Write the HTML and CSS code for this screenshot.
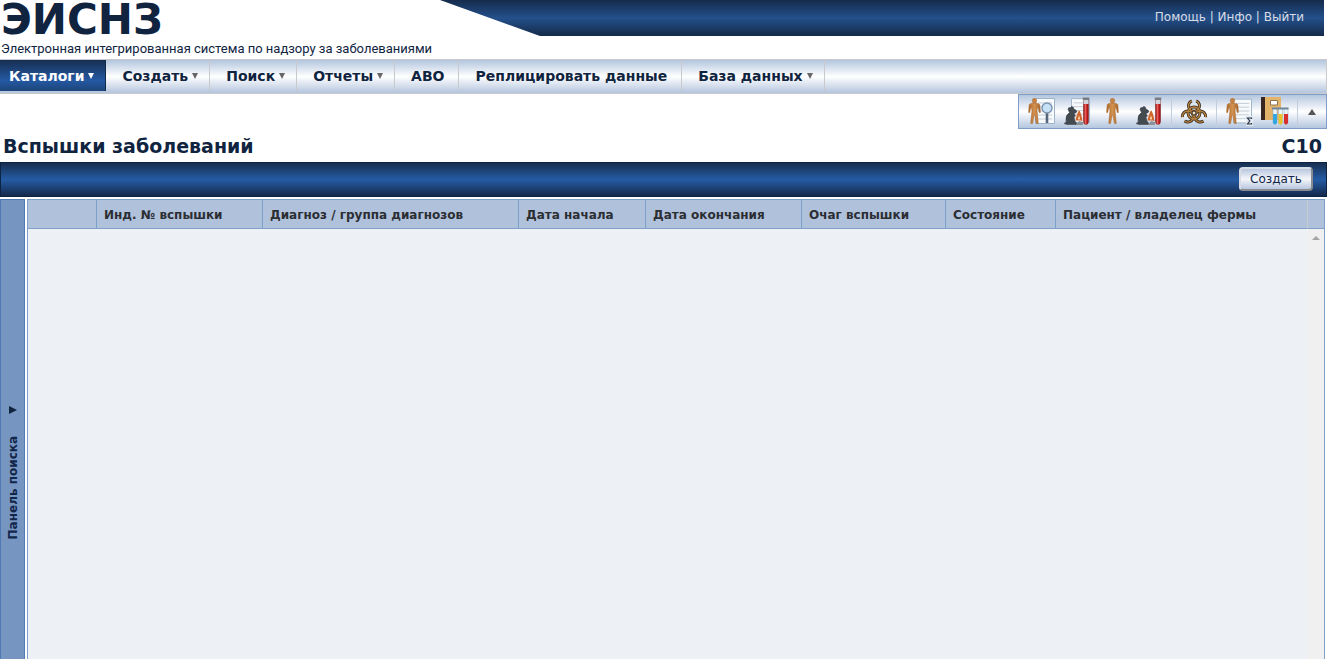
FILE: index.html
```html
<!DOCTYPE html>
<html lang="ru">
<head>
<meta charset="utf-8">
<title>ЭИСНЗ – Вспышки заболеваний</title>
<link rel="stylesheet" href="styles.css">
</head>
<body>
<svg class="defs" aria-hidden="true">
  <defs>
    <linearGradient id="skin" x1="0" x2="1" y1="0" y2="0"><stop offset="0" stop-color="#b06a2b"/><stop offset=".5" stop-color="#d3924f"/><stop offset="1" stop-color="#a8652a"/></linearGradient>
    <linearGradient id="blood" x1="0" x2="1" y1="0" y2="0"><stop offset="0" stop-color="#8c1010"/><stop offset=".4" stop-color="#e8605a"/><stop offset=".7" stop-color="#c01c1c"/><stop offset="1" stop-color="#8c1010"/></linearGradient>
    <symbol id="man" viewBox="0 0 14 28"><path d="M5.500 5.300L2.200 6.300Q1.200 6.800 1.100 8.500L.6 15.500 1.800 15.800 3.400 9.500 4.200 13 2.900 27.500H5L6.900 17.500H7.100L9 27.500H11.100L9.800 13 10.600 9.500 12.200 15.800 13.400 15.500 12.900 8.500Q12.800 6.800 11.800 6.300L8.500 5.300Z" fill="url(#skin)" stroke="#9a5c27" stroke-width=".4"/><circle cx="7" cy="2.900" r="2.500" fill="#c58243" stroke="#9a5c27" stroke-width=".4"/></symbol>
    <symbol id="sheet" viewBox="0 0 20 26"><path d="M.5 .5H19.500V25.500H.5Z" fill="#f7fafc" stroke="#9db3c8"/><path d="M3 5H17M3 9H17M3 13H17M3 17H17M3 21H17" stroke="#c3cbd4"/></symbol>
    <symbol id="rat" viewBox="0 0 30 30"><path d="M1 26.500Q4 26 3 22.500 2.500 18 6.500 15.500L5 12.500Q5 10 7.500 10.500L8.500 9.500Q11 9.500 10.500 11.500L14 14 13 15.800 11 16.500 12.500 19 11 20 12 24 14.500 27.500H4Z" fill="#444b50" stroke="#33393e" stroke-width=".5"/><path d="M13 27.500L16 24 20 25V28H13Z" fill="#8c9298"/><path d="M12.500 23.500Q13 19 15.500 14L16.500 13.500Q19 18 19.500 24L17.500 23.500H14.500Z" fill="#d1662c"/><path d="M16 18.500L17 21.500 16 23 15 21.500Z" fill="#ffe0b8"/></symbol>
    <symbol id="tube" viewBox="0 0 8 28"><path d="M1.500 2V24Q1.500 27.500 4 27.500T6.500 24V2Z" fill="url(#blood)" stroke="#7a1a1a" stroke-width=".5"/><path d="M1.500 3H6.500V7H1.500Z" fill="#cdd5de"/><path d="M.8 .5H7.200V3H.8Z" fill="#777d83"/></symbol>
    <path id="lobe" d="M12.800 3.800A5.500 5.500 0 1 0 17.200 3.800"/>
    <g id="hazard" fill="none"><circle cx="15" cy="16" r="6"/><use href="#lobe"/><use href="#lobe" transform="rotate(120 15 16)"/><use href="#lobe" transform="rotate(240 15 16)"/></g>
  </defs>
</svg>

<header class="masthead">
  <div class="brand">
    <div class="logo">ЭИСНЗ</div>
    <div class="tagline">Электронная интегрированная система по надзору за заболеваниями</div>
  </div>
  <div class="banner">
    <div class="userlinks"><a href="#">Помощь</a> | <a href="#">Инфо</a> | <a href="#">Выйти</a></div>
  </div>
</header>

<nav class="menu">
  <a class="item active" href="#">Каталоги<i class="caret"></i></a>
  <a class="item" href="#">Создать<i class="caret"></i></a>
  <a class="item" href="#">Поиск<i class="caret"></i></a>
  <a class="item" href="#">Отчеты<i class="caret"></i></a>
  <a class="item plain" href="#">АВО</a>
  <a class="item plain" href="#">Реплицировать данные</a>
  <a class="item" href="#">База данных<i class="caret"></i></a>
</nav>

<div class="toolrow">
  <div class="toolbar">
    <div class="group main">
      <button class="tool wide" aria-label="Поиск случаев у людей"><svg viewBox="0 0 30 30"><use href="#sheet" x="8" y="1" width="20" height="26"/><use href="#man" x="1" y="0" width="13" height="28"/><path d="M20 16V26" stroke="#54677b" stroke-width="2.600"/><circle cx="20" cy="11" r="5" fill="#c6e0f6" stroke="#7a93ad" stroke-width="1.400"/></svg></button>
      <button class="tool wide" aria-label="Поиск ветеринарных случаев"><svg viewBox="0 0 30 30"><use href="#sheet" x="8" y="1" width="19" height="25"/><use href="#rat" x="0" y="0" width="30" height="30"/><use href="#tube" x="19" y="0" width="8" height="28"/></svg></button>
      <button class="tool wide" aria-label="Случай у человека"><svg viewBox="0 0 30 30"><use href="#man" x="7" y="0" width="13" height="28"/></svg></button>
      <button class="tool wide" aria-label="Ветеринарный случай"><svg viewBox="0 0 30 30"><use href="#rat" x="0" y="0" width="30" height="30"/><use href="#tube" x="19" y="0" width="8" height="28"/></svg></button>
    </div>
    <div class="group">
      <button class="tool" aria-label="Вспышки"><svg viewBox="0 0 30 30"><use href="#hazard" stroke="#33291d" stroke-width="3"/><use href="#hazard" stroke="#b98340" stroke-width="1.400"/><circle cx="15" cy="16" r="2" fill="#efe5d0" stroke="#33291d"/></svg></button>
    </div>
    <div class="group reports">
      <button class="tool wide" aria-label="Сводные данные"><svg viewBox="0 0 30 30"><use href="#sheet" x="8" y="1" width="19" height="26"/><use href="#man" x="1" y="0" width="13" height="28"/><path d="M21 19H28V29H21Z" fill="#e3eaf2"/><path d="M26.500 22V21H22.500L24.800 24 22.500 27H26.500V26" fill="none" stroke="#243244" stroke-width="1.200"/></svg></button>
      <button class="tool" aria-label="Лаборатория"><svg viewBox="0 0 30 30"><path d="M0 0H4V23H0Z" fill="#38261f"/><path d="M4 0H20V23H4Z" fill="#e3b36a"/><path d="M9.500 3.500H16.500V8H9.500Z" fill="#fff" stroke="#8b7450"/><g stroke="#8ba7bd" stroke-width=".5"><path d="M12 11H16V26Q14 29 12 26ZM17.500 11H21.500V26Q19.500 29 17.500 26ZM23 11H27V26Q25 29 23 26Z" fill="#eaf4fb"/></g><path d="M12 17H16V26Q14 29 12 26Z" fill="#35a7e0"/><path d="M17.500 17H21.500V26Q19.500 29 17.500 26Z" fill="#eac22b"/><path d="M23 17H27V26Q25 29 23 26Z" fill="#d62e2e"/><path d="M11 10.500H27.500V12.500H11Z" fill="#71869c"/></svg></button>
    </div>
    <button class="collapse" aria-label="Свернуть"><i class="up"></i></button>
  </div>
</div>

<main>
  <div class="titlebar"><h1>Вспышки заболеваний</h1><span class="code">C10</span></div>
  <div class="actions"><button class="create">Создать</button></div>
  <div class="content">
    <button class="panel"><i class="right"></i><span>Панель поиска</span></button>
    <div class="grid">
      <table>
        <colgroup><col class="c1"><col class="c2"><col class="c3"><col class="c4"><col class="c5"><col class="c6"><col class="c7"><col><col class="c9"></colgroup>
        <thead><tr><th></th><th>Инд. № вспышки</th><th>Диагноз / группа диагнозов</th><th>Дата начала</th><th>Дата окончания</th><th>Очаг вспышки</th><th>Состояние</th><th>Пациент / владелец фермы</th><th class="end"></th></tr></thead>
      </table>
      <div class="rows"><div class="track"><i class="up light"></i></div></div>
    </div>
  </div>
</main>
</body>
</html>
```
FILE: styles.css
```css
* { box-sizing: border-box; }
body {
  margin: 0;
  min-height: 100vh;
  display: flex;
  flex-direction: column;
  overflow: hidden;
  background: #fff;
  color: #11264a;
  font: 12px "DejaVu Sans", Verdana, sans-serif;
}
a { color: inherit; text-decoration: none; }
button { border: 0; padding: 0; background: none; color: inherit; font: inherit; }
.defs { position: absolute; width: 0; height: 0; }

.masthead { display: flex; height: 59px; }
.brand { width: 440px; flex: none; padding-left: 1px; white-space: nowrap; color: #10243f; }
.logo { font-size: 42px; line-height: 39px; font-weight: bold; }
.tagline { font-family: Roboto, sans-serif; font-size: 13px; line-height: 20px; }
.banner {
  flex: 1;
  height: 36px;
  margin-right: 3px;
  display: flex;
  justify-content: flex-end;
  background: linear-gradient(#152b4b, #24508b 50%, #142a4a);
  clip-path: polygon(0 0, 100% 0, 100% 100%, 100px 100%);
}
.userlinks { padding-right: 20px; line-height: 34px; color: #d9dde5; white-space: pre; font-size: 12px; }

.menu {
  display: flex;
  height: 35px;
  padding-bottom: 2px;
  border: 1px solid #c8cacd;
  border-left: 0;
  background: linear-gradient(#b2c5de, #fff 50%, #b4c5de);
}
.item {
  display: flex;
  align-items: center;
  gap: 4px;
  padding: 0 11px 0 16px;
  border-right: 1px solid #c8cacd;
  font-size: 14px;
  font-weight: bold;
  color: #10243f;
  white-space: nowrap;
}
.item.plain { padding-right: 14px; }
.item.active { padding-left: 9px; color: #fff; border-color: #12294a; background: linear-gradient(#172e50, #2459a3 66%, #1d4579); }
.caret { border: 3px solid transparent; border-top: 6px solid #666; border-bottom: 0; }
.active .caret { border-top-color: #fff; }

.toolrow { display: flex; justify-content: flex-end; height: 35px; }
.toolbar {
  display: flex;
  border: 1px solid #7e9ec8;
  background: linear-gradient(#b4c6df, #fff 50%, #b4c6df);
}
.group { display: flex; padding: 0 7px; border-right: 1px solid #c2cddd; }
.group.main { padding: 0 0 0 8px; }
.group.reports { padding: 0 6px 0 8px; }
.tool { width: 30px; height: 33px; }
.tool.wide { width: 36px; }
.tool svg { display: block; width: 30px; height: 30px; margin-top: 1px; }
.collapse { width: 28px; display: flex; align-items: center; justify-content: center; }
.up { border: 4px solid transparent; border-bottom: 6px solid #555; border-top: 0; }

main { flex: 1; display: flex; flex-direction: column; }
.titlebar { display: flex; justify-content: space-between; height: 33px; padding: 0 5px 0 3px; line-height: 34px; font-size: 19px; font-weight: bold; color: #10243f; }
h1 { margin: 0; font-size: 19px; }
.actions {
  display: flex;
  justify-content: flex-end;
  align-items: flex-start;
  height: 35px;
  padding: 4px 13px 0 0;
  border: 1px solid #0d2344;
  background: linear-gradient(#172f50, #255ba4 50%, #14294b);
}
.create {
  width: 74px;
  height: 24px;
  border: 2px outset #d8dce4;
  border-radius: 4px;
  font-size: 12px;
  line-height: 18px;
  background: linear-gradient(#b9c7df, #f4f6fa 50%, #b9c7df);
}
.content { flex: 1; display: flex; gap: 2px; padding: 2px 2px 0 0; }
.panel {
  width: 25px;
  display: flex;
  flex-direction: column;
  align-items: center;
  justify-content: center;
  gap: 22px;
  padding-top: 86px;
  border: 1px solid #4f7ab3;
  border-bottom: 0;
  background: #7795c1;
  font-weight: bold;
}
.panel span { writing-mode: vertical-rl; transform: rotate(180deg); }
.right { border: 4px solid transparent; border-left: 8px solid #10243f; border-right: 0; }
.grid { flex: 1; display: flex; flex-direction: column; border: 1px solid #7fa0c9; border-bottom: 0; background: #edf0f5; }
table { width: 100%; table-layout: fixed; border-collapse: separate; border-spacing: 0; }
th { height: 29px; padding: 1px 0 0 7px; text-align: left; font-size: 12px; color: #2b2e33; white-space: nowrap; background: #b0c1db; border-bottom: 1px solid #7fa0c9; border-right: 1px solid #7fa0c9; }
th:nth-child(8) { border-right-color: #c8cacd; }
th.end { border-right: 0; padding: 0; }
.c1 { width: 69px; }
.c2 { width: 166px; }
.c3 { width: 256px; }
.c4 { width: 127px; }
.c5 { width: 156px; }
.c6 { width: 144px; }
.c7 { width: 110px; }
.c9 { width: 16px; }
.rows { flex: 1; display: flex; justify-content: flex-end; }
.track { width: 17px; display: flex; justify-content: center; align-items: flex-start; padding-top: 7px; background: #f0f0f0; }
.up.light { border-bottom: 4px solid #a3a3a3; }
```
